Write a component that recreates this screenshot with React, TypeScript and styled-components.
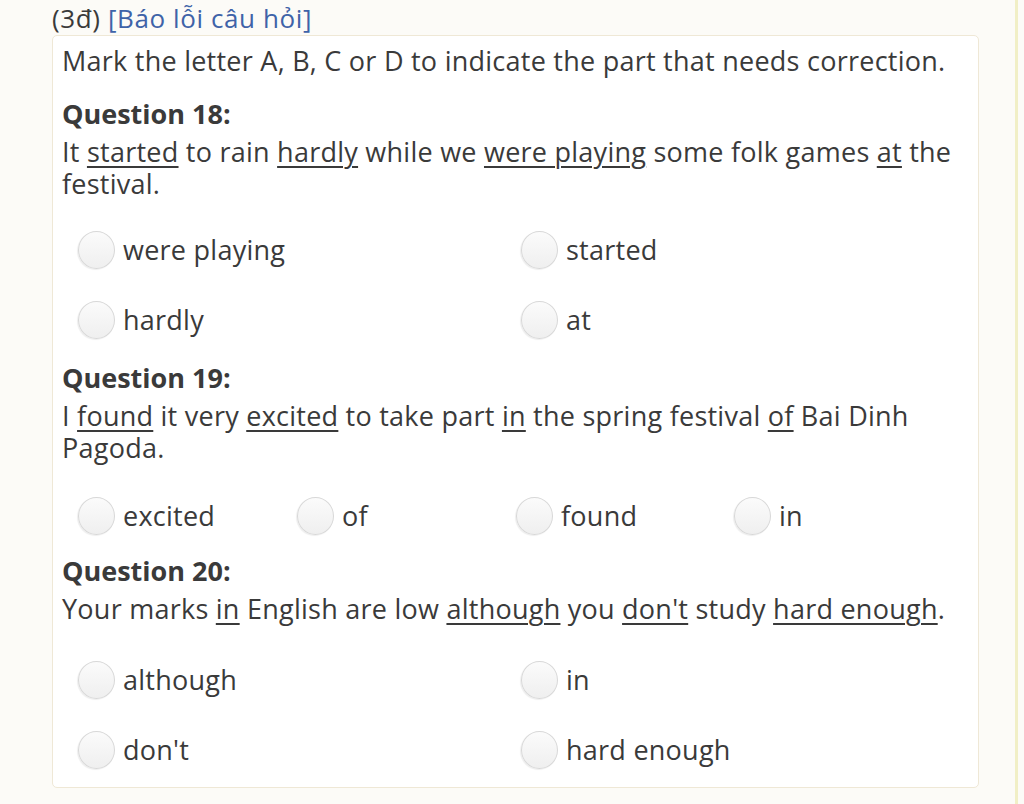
import React from "react";
import styled, { createGlobalStyle } from "styled-components";

const GlobalStyle = createGlobalStyle`
  html, body {
    margin: 0;
    padding: 0;
    background: #fcfbf7;
  }
  body {
    font-family: "Open Sans", Lato, "Noto Sans", sans-serif;
    color: #3a3a3a;
  }
`;

const Page = styled.div`
  width: 1018px;
  height: 804px;
  box-sizing: border-box;
  border-right: 3px solid #f1efc6;
  padding: 3px 36px 0 52px;
  overflow: hidden;
`;

const Header = styled.div`
  font-size: 26px;
  line-height: 30px;
  height: 32px;
  letter-spacing: 0.6px;
  color: #3a3a3a;
`;

const ReportLink = styled.span`
  color: #3f63a8;
`;

const Card = styled.div`
  background: #fff;
  border: 1px solid #efe8d6;
  border-radius: 5px;
  padding: 7px 10px 20px 9px;
  height: 753px;
  box-sizing: border-box;
`;

const Instruction = styled.div`
  font-size: 27px;
  line-height: 36px;
  letter-spacing: 0.25px;
`;

const QuestionTitle = styled.div<{ $gap: number }>`
  font-size: 27px;
  font-weight: 700;
  line-height: 36px;
  margin-top: ${(p) => p.$gap}px;
`;

const Sentence = styled.div`
  font-size: 27px;
  line-height: 32px;
  letter-spacing: 0.25px;
  margin-top: 4px;

  u {
    text-decoration-thickness: 2px;
    text-underline-offset: 4px;
  }
`;

const Options = styled.div<{ $cols: string; $top: number }>`
  display: grid;
  grid-template-columns: ${(p) => p.$cols};
  padding-left: 16px;
  margin-top: ${(p) => p.$top}px;
  row-gap: 31px;
`;

const Option = styled.label`
  display: flex;
  align-items: center;
  gap: 8px;
  font-size: 27px;
  letter-spacing: 0.25px;
  height: 39px;
`;

const Radio = styled.span`
  width: 37px;
  height: 38px;
  border-radius: 50%;
  box-sizing: border-box;
  border: 1.5px solid #d8d8d8;
  background: linear-gradient(#fbfbfb, #efefef);
  box-shadow: -1px 1px 1px rgba(0, 0, 0, 0.07);
  flex-shrink: 0;
`;

type Q = {
  no: number;
  gap: number;
  top: number;
  sentence: React.ReactNode;
  cols: string;
  options: string[];
};

const questions: Q[] = [
  {
    no: 18,
    gap: 17,
    top: 30,
    sentence: (
      <>
        It <u>started</u> to rain <u>hardly</u> while we <u>were playing</u> some
        folk games <u>at</u> the festival.
      </>
    ),
    cols: "443px 1fr",
    options: ["were playing", "started", "hardly", "at"],
  },
  {
    no: 19,
    gap: 21,
    top: 32,
    sentence: (
      <>
        I <u>found</u> it very <u>excited</u> to take part <u>in</u> the spring
        festival <u>of</u> Bai Dinh Pagoda.
      </>
    ),
    cols: "219px 219px 218px 1fr",
    options: ["excited", "of", "found", "in"],
  },
  {
    no: 20,
    gap: 18,
    top: 35,
    sentence: (
      <>
        Your marks <u>in</u> English are low <u>although</u> you <u>don't</u>{" "}
        study <u>hard enough</u>.
      </>
    ),
    cols: "443px 1fr",
    options: ["although", "in", "don't", "hard enough"],
  },
];

export default function App() {
  return (
    <>
      <GlobalStyle />
      <Page>
        <Header>
          (3đ) <ReportLink>[Báo lỗi câu hỏi]</ReportLink>
        </Header>
        <Card>
          <Instruction>
            Mark the letter A, B, C or D to indicate the part that needs correction.
          </Instruction>
          {questions.map((q) => (
            <div key={q.no}>
              <QuestionTitle $gap={q.gap}>Question {q.no}:</QuestionTitle>
              <Sentence>{q.sentence}</Sentence>
              <Options $cols={q.cols} $top={q.top}>
                {q.options.map((o) => (
                  <Option key={o}>
                    <Radio />
                    {o}
                  </Option>
                ))}
              </Options>
            </div>
          ))}
        </Card>
      </Page>
    </>
  );
}
